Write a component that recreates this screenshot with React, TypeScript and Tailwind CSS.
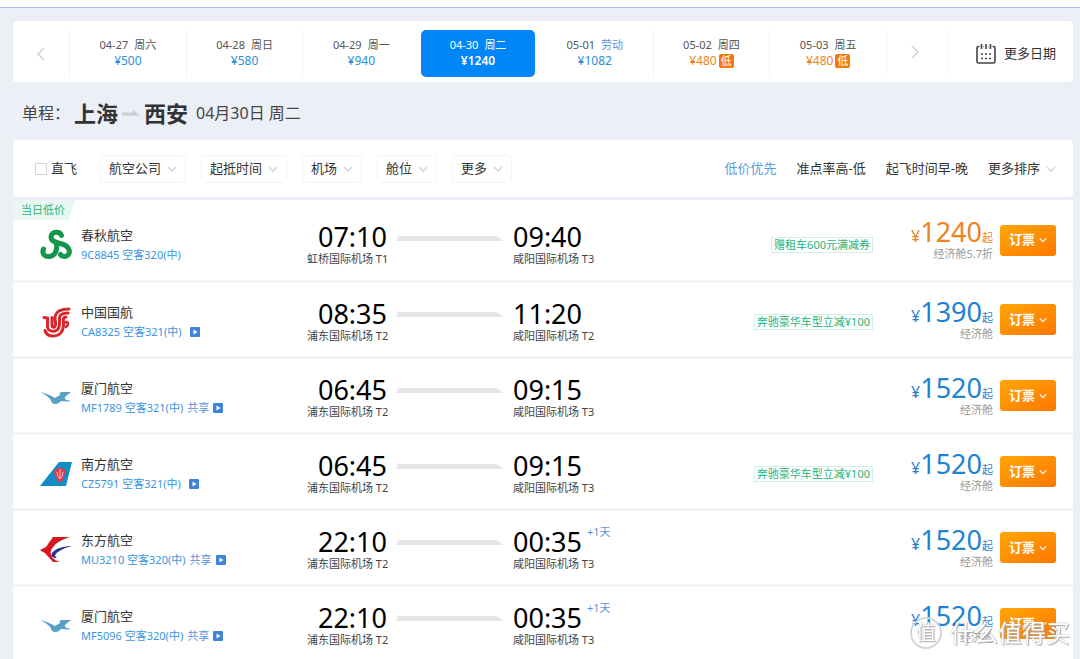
import { useState } from 'react'

interface DateTab {
  date: string
  day: string
  price: number
  low?: boolean
  holiday?: boolean
}

interface Flight {
  airline: string
  logo: string
  code: string
  plane: string
  shared?: boolean
  video?: boolean
  depart: string
  from: string
  arrive: string
  to: string
  nextDay?: boolean
  promo?: string
  price: number
  cabin: string
  lowest?: boolean
}

const dates: DateTab[] = [
  { date: '04-27', day: '周六', price: 500 },
  { date: '04-28', day: '周日', price: 580 },
  { date: '04-29', day: '周一', price: 940 },
  { date: '04-30', day: '周二', price: 1240 },
  { date: '05-01', day: '劳动', price: 1082, holiday: true },
  { date: '05-02', day: '周四', price: 480, low: true },
  { date: '05-03', day: '周五', price: 480, low: true },
]

const flights: Flight[] = [
  { airline: '春秋航空', logo: 'spring', code: '9C8845', plane: '空客320(中)', depart: '07:10', from: '虹桥国际机场 T1', arrive: '09:40', to: '咸阳国际机场 T3', promo: '赠租车600元满减券', price: 1240, cabin: '经济舱5.7折', lowest: true },
  { airline: '中国国航', logo: 'airchina', code: 'CA8325', plane: '空客321(中)', video: true, depart: '08:35', from: '浦东国际机场 T2', arrive: '11:20', to: '咸阳国际机场 T2', promo: '奔驰豪华车型立减¥100', price: 1390, cabin: '经济舱' },
  { airline: '厦门航空', logo: 'xiamen', code: 'MF1789', plane: '空客321(中)', shared: true, video: true, depart: '06:45', from: '浦东国际机场 T2', arrive: '09:15', to: '咸阳国际机场 T3', price: 1520, cabin: '经济舱' },
  { airline: '南方航空', logo: 'southern', code: 'CZ5791', plane: '空客321(中)', video: true, depart: '06:45', from: '浦东国际机场 T2', arrive: '09:15', to: '咸阳国际机场 T3', promo: '奔驰豪华车型立减¥100', price: 1520, cabin: '经济舱' },
  { airline: '东方航空', logo: 'eastern', code: 'MU3210', plane: '空客320(中)', shared: true, video: true, depart: '22:10', from: '浦东国际机场 T2', arrive: '00:35', to: '咸阳国际机场 T3', nextDay: true, price: 1520, cabin: '经济舱' },
  { airline: '厦门航空', logo: 'xiamen', code: 'MF5096', plane: '空客320(中)', shared: true, video: true, depart: '22:10', from: '浦东国际机场 T2', arrive: '00:35', to: '咸阳国际机场 T3', nextDay: true, price: 1520, cabin: '经济舱' },
]

const filters = ['航空公司', '起抵时间', '机场', '舱位', '更多']
const sorts = ['低价优先', '准点率高-低', '起飞时间早-晚']

function Chevron({ className }: { className: string }) {
  return (
    <svg className={className} viewBox="0 0 10 6" fill="none" stroke="currentColor" aria-hidden="true">
      <path d="M1 1l4 4 4-4" strokeWidth={1.5} />
    </svg>
  )
}

function AirlineLogo({ name }: { name: string }) {
  switch (name) {
    case 'spring':
      return (
        <svg className="w-8 h-8 shrink-0" viewBox="0 0 32 32" fill="none" stroke="#12964b" strokeWidth={5} strokeLinecap="round" aria-hidden="true">
          <path d="M21.500 6.500C20 2 11 2 11 8C11 13 17 13.500 22 15C30 17.500 31.500 25 26.500 27C24 28 21.500 27 20.500 25.500" />
          <path d="M3.500 20C1.500 25 5 28 9.500 27.500C14.500 27 17.500 22 16.500 15" />
        </svg>
      )
    case 'airchina':
      return (
        <svg className="w-8 h-8 shrink-0" viewBox="0 0 32 32" fill="none" stroke="#d9252c" strokeLinecap="round" aria-hidden="true">
          <path d="M29 3C21 3 17 5 15.500 9C14 13 16 14 15.500 19C15 22 12 22 12 19V11.500" strokeWidth={3} />
          <path d="M28 7C22 7 19.500 9 19.500 12C19.500 15 20 17 19 21C17.500 26.500 9 27 7.500 21V12L4 11.500" strokeWidth={3} />
          <path d="M26 11C23.500 11 23 13 23.500 16C24 24 21 30 13 30C9 30 6 28 5 24.500" strokeWidth={3} />
          <path d="M24 17C28 14 29.500 18 26 21" strokeWidth={2.500} />
        </svg>
      )
    case 'xiamen':
      return (
        <svg className="w-8 h-8 shrink-0" viewBox="0 0 32 32" aria-hidden="true">
          <path d="M0 10C5 11 10 13 15 16L20 13C19 11 20 10 22 10H31L26 14C24 16 24 18 31 19C27 20 24 19 21 19C19 21.500 16 23 12 21C11 17 7 13 0 10Z" fill="#5a9fc6" />
        </svg>
      )
    case 'southern':
      return (
        <svg className="w-8 h-8 shrink-0" viewBox="0 0 32 32" aria-hidden="true">
          <path d="M19 4H32L26 28H0Z" fill="#148cc4" />
          <path d="M20 10C17 10 13.500 12 14 15C14.200 17 16 16 16 18C16 21 18 24 20 24C22 24 24 21 24 18C24 16 25.800 17 26 15C26.500 12 23 10 20 10Z" fill="#e23a46" />
          <path d="M20 11V21M17 14L18 18.500L20 21L22 18.500L23 14" fill="none" stroke="#f3c5d0" strokeWidth={1} />
        </svg>
      )
    default:
      return (
        <svg className="w-8 h-8 shrink-0" viewBox="0 0 32 32" aria-hidden="true">
          <path d="M13 3H30C24 5 18 7 14 12C11 15 10 18 11 21C12 24 16 27 20 28H13L5 19C3 18 1 17 0 16L6 13Z" fill="#d8151f" />
          <path d="M32 12C24 12 16 14 12 19C10 22 13 24 17 24C14 22 15 20 18 18C22 15 27 13 32 12Z" fill="#27318f" />
        </svg>
      )
  }
}

function DateBar() {
  const [selected, setSelected] = useState(3)

  return (
    <nav className="flex items-stretch bg-white rounded-sm h-[61px] pt-1" aria-label="日期">
      <button type="button" aria-label="前一周" className="w-14 flex items-center justify-center text-gray-300">
        <svg className="w-2 h-3.5" viewBox="0 0 8 14" fill="none" stroke="currentColor"><path d="M7 1L1 7l6 6" strokeWidth={1.6} /></svg>
      </button>
      <div className="flex flex-1 items-center">
        {dates.map((item, index) => {
          const active = index === selected
          return (
            <div key={item.date} className={active || index === selected + 1 ? 'flex-1 px-px border-l border-transparent' : 'flex-1 px-px border-l border-gray-100'}>
              <button
                type="button"
                onClick={() => setSelected(index)}
                className={`w-full h-[47px] pb-0.5 rounded-[5px] flex flex-col items-center justify-center text-[11px] leading-4 ${active ? 'bg-[#0086f6] text-white' : 'text-[#555]'}`}
              >
                <span className="flex gap-1.5">
                  <span>{item.date}</span>
                  <span className={item.holiday ? 'text-[#5b93dd]' : ''}>{item.day}</span>
                </span>
                <span className={`flex items-center gap-0.5 text-xs leading-4 ${active ? 'font-semibold' : item.low ? 'text-[#ee8322]' : 'text-[#2b8fdc]'}`}>
                  ¥{item.price}
                  {item.low && <span className="bg-[#f5780d] text-white text-[11px] leading-3.5 px-0.5 rounded-xs">低</span>}
                </span>
              </button>
            </div>
          )
        })}
      </div>
      <button type="button" aria-label="后一周" className="w-[63px] pr-1.5 mt-1 mb-2 border-x border-gray-100 flex items-center justify-center text-gray-300">
        <svg className="w-2 h-3.5" viewBox="0 0 8 14" fill="none" stroke="currentColor"><path d="M1 1l6 6-6 6" strokeWidth={1.6} /></svg>
      </button>
      <button type="button" className="w-[124px] pl-2.5 flex items-center justify-center gap-2 text-[13px] text-[#333]">
        <svg className="w-5 h-5" viewBox="0 0 20 20" fill="none" stroke="#444" strokeWidth={1.600} aria-hidden="true">
          <path d="M3.500 2.500H2.500Q1 2.500 1 4V17.500Q1 19 2.500 19H17.500Q19 19 19 17.500V4Q19 2.500 17.500 2.500H16.500M7.500 2.500H8M12 2.500H12.500" />
          <path d="M5.500 0V5M10 0V5M14.500 0V5" />
          <path d="M5 10h2M9 10h2M13 10h2M5 14.500h2M9 14.500h2M13 14.500h2" />
        </svg>
        更多日期
      </button>
    </nav>
  )
}

function FilterBar() {
  return (
    <div className="flex items-center justify-between h-[57px] pl-[22px] pr-[17px] bg-white rounded-sm text-[13px] text-[#333]">
      <div className="flex items-center gap-[15px]">
        <label className="flex items-center gap-1 mr-2">
          <input type="checkbox" className="appearance-none size-3 border border-gray-300 bg-white checked:bg-[#0086f6]" />
          直飞
        </label>
        {filters.map((name) => (
          <button key={name} type="button" className="h-7 px-2 border border-gray-100 rounded-sm flex items-center gap-1.5">
            {name}
            <Chevron className="w-2.5 h-1.5 text-gray-300" />
          </button>
        ))}
      </div>
      <div className="flex items-center gap-5">
        {sorts.map((name, index) => (
          <button key={name} type="button" className={index === 0 ? 'text-[#5b9be0]' : ''}>{name}</button>
        ))}
        <button type="button" className="flex items-center gap-1.5">
          更多排序
          <Chevron className="w-2.5 h-1.5 text-gray-300" />
        </button>
      </div>
    </div>
  )
}

function FlightRow({ flight }: { flight: Flight }) {
  // the lowest fare row is taller, its tag pushes the details down
  const shift = flight.lowest ? 'pt-2.5' : 'pt-1'

  return (
    <li className={`relative flex items-center pl-[27px] pr-[17px] bg-white border-b-3 border-[#f3f4f6] last:border-b-0 last:min-h-[73px] ${flight.lowest ? 'min-h-[83px]' : 'min-h-19'}`}>
      {flight.lowest && (
        <span className="absolute left-0 top-0 h-5 pl-2 pr-2.5 bg-[#e8f8f1] text-[#2bb380] text-[11px] leading-5 [clip-path:polygon(0_0,100%_0,90%_100%,0_100%)]">当日低价</span>
      )}
      <div className={`flex flex-1 items-center gap-[9px] ${shift}`}>
        <AirlineLogo name={flight.logo} />
        <div>
          <div className="text-[13px] leading-5 text-[#333]">{flight.airline}</div>
          <div className="flex items-center text-[11px] leading-5 text-[#3b95e0] whitespace-nowrap">
            <a href="#">{flight.code} {flight.plane}</a>
            {flight.shared && <span className="ml-1 text-[#5b93dd]">共享</span>}
            {flight.video && (
              <svg className={flight.shared ? 'ml-1 w-2.5 h-2.5' : 'ml-2 w-2.5 h-2.5'} viewBox="0 0 10 10" aria-hidden="true">
                <rect width="10" height="10" rx="1" fill="#3f83dc" />
                <path d="M3.500 2.500L7.500 5L3.500 7.500Z" fill="#fff" />
              </svg>
            )}
          </div>
        </div>
      </div>
      <div className={`w-20 text-right ${shift}`}>
        <div className="text-[27px] leading-7 text-black">{flight.depart}</div>
        <div className="text-[11px] leading-4 text-[#444] whitespace-nowrap">{flight.from}</div>
      </div>
      <div className={`ml-[9px] mr-2.5 shrink-0 ${shift}`}>
        <svg className="block w-[107px] h-[5px] mb-3.5" viewBox="0 0 107 5" aria-hidden="true">
          <path d="M2 0H99Q104 1 107 5H0Z" fill="#e6e6e6" />
        </svg>
      </div>
      <div className={`relative w-[93px] ${shift}`}>
        <div className="text-[27px] leading-7 text-black">{flight.arrive}</div>
        <div className="text-[11px] leading-4 text-[#444] whitespace-nowrap">{flight.to}</div>
        {flight.nextDay && <span className="absolute left-[74px] top-0 text-[11px] leading-4 text-[#5b93dd] whitespace-nowrap">+1天</span>}
      </div>
      <div className={`flex-1 flex justify-end ${shift}`}>
        {flight.promo && <span className="px-0.5 border border-[#d5f0e4] text-[11px] leading-3.5 text-[#1fb478]">{flight.promo}</span>}
      </div>
      <div className="w-[120px] text-right">
        <div className={`flex items-baseline justify-end h-7 leading-7 ${flight.lowest ? 'text-[#ee8322]' : 'text-[#1f83d2]'}`}>
          <span className="text-base leading-7">¥</span>
          <span className="text-[27px] leading-7">{flight.price}</span>
          <span className="text-[11px] leading-7">起</span>
        </div>
        <div className="text-[11px] leading-4 text-[#999]">{flight.cabin}</div>
      </div>
      <button type="button" className="ml-[7px] w-14 h-[31px] rounded-[3px] bg-linear-to-br from-[#ffa50a] to-[#ff7700] text-white text-[13px] font-bold flex items-center justify-center gap-1">
        订票
        <Chevron className="w-2 h-1.5" />
      </button>
    </li>
  )
}

function App() {
  return (
    <div className="relative min-h-screen bg-[#ecf0f6] font-['Noto_Sans','Noto_Sans_CJK_SC',sans-serif]">
      <div className="h-2 bg-white border-b border-[#a5c5ec]" />
      <main className="pl-[13px] pr-[7px] pt-[13px]">
        <DateBar />
        <h1 className="flex items-center h-[58px] pt-1 pl-[9px] text-base text-[#444]">
          <span>单程：</span>
          <span className="ml-1 text-[22px] font-bold text-[#333]">上海</span>
          <svg className="w-[18px] h-2 mx-1" viewBox="0 0 18 8" aria-hidden="true">
            <path d="M0 3.500H11V1L18 6.500H0Z" fill="#c8ccd2" />
          </svg>
          <span className="text-[22px] font-bold text-[#333]">西安</span>
          <span className="ml-2">04月30日 周二</span>
        </h1>
        <FilterBar />
        <ul className="mt-[3px]">
          {flights.map((flight) => (
            <FlightRow key={flight.code} flight={flight} />
          ))}
        </ul>
      </main>

      {/* site watermark, floats over the list */}
      <div className="fixed right-2.5 bottom-2.5 flex items-center gap-2 text-white pointer-events-none [text-shadow:0_0_2px_#aaa,1px_1px_1px_#aaa]">
        <span className="size-8 rounded-full border-2 border-gray-300 flex items-center justify-center text-xl leading-none">值</span>
        <span className="text-2xl leading-8">什么值得买</span>
      </div>
    </div>
  )
}

export default App
